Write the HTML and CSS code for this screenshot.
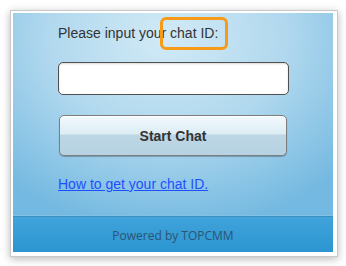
FILE: index.html
```html
<!DOCTYPE html>
<html>
<head>
<meta charset="utf-8">
<link rel="stylesheet" href="styles.css">
</head>
<body>
<div class="frame">
  <div class="panel">
    <div class="content">
      <div class="label">Please input your chat ID:</div>
      <div class="highlight"></div>
      <input class="chat-input" type="text">
      <button class="start-btn">Start Chat</button>
      <a class="help-link" href="#">How to get your chat ID.</a>
    </div>
    <div class="footer">Powered by TOPCMM</div>
  </div>
</div>
</body>
</html>
```
FILE: styles.css
```css
html, body {
  margin: 0;
  padding: 0;
  background: #ffffff;
  width: 346px;
  height: 266px;
  overflow: hidden;
}
.frame {
  margin: 10px 0 0 10px;
  width: 322px;
  height: 241px;
  border: 1px solid #c9c9c9;
  padding: 2px;
  background: #ffffff;
  box-shadow: 0 2px 8px rgba(0,0,0,0.28);
}
.panel {
  width: 320px;
  height: 239px;
  display: flex;
  flex-direction: column;
}
.content {
  position: relative;
  flex: 1;
  display: flex;
  flex-direction: column;
  align-items: flex-start;
  padding: 12px 0 0 45px;
  background: radial-gradient(ellipse 75% 95% at 48% 12%, #d2eaf6 0%, #b0d8ee 50%, #74b9e1 100%);
  border-bottom: 1px solid #3d8fc3;
  box-shadow: inset 0 -1px 0 #83c1e4;
}
.label {
  font-family: "Liberation Sans", Arial, sans-serif;
  font-size: 14px;
  line-height: 17px;
  color: #333333;
}
.highlight {
  position: absolute;
  left: 147px;
  top: 4px;
  width: 62px;
  height: 27px;
  border: 3px solid #f79a17;
  border-radius: 6px;
}
.chat-input {
  margin-top: 20px;
  box-sizing: border-box;
  width: 231px;
  height: 33px;
  border: 1.5px solid #505050;
  border-radius: 5px;
  background: #ffffff;
  padding: 0 6px;
  outline: none;
  box-shadow: inset 0 1px 2px rgba(0,0,0,0.15);
}
.start-btn {
  margin-top: 20px;
  margin-left: 1px;
  box-sizing: border-box;
  width: 228px;
  height: 41px;
  border: 1px solid #7d7d7d;
  border-radius: 5px;
  background: linear-gradient(to bottom, #f2f9fc 0%, #dcedf4 45%, #bcd6e4 50%, #b7d2e2 100%);
  box-shadow: inset 0 1px 0 #ffffff, 0 1px 1px rgba(0,0,0,0.25);
  font-family: "Liberation Sans", Arial, sans-serif;
  font-weight: bold;
  font-size: 14px;
  color: #333333;
  padding: 0;
}
.help-link {
  margin-top: 20px;
  font-family: "Liberation Sans", Arial, sans-serif;
  font-size: 14px;
  line-height: 17px;
  color: #1f4fff;
  text-decoration: underline;
}
.footer {
  height: 35px;
  display: flex;
  align-items: center;
  justify-content: center;
  background: linear-gradient(to bottom, #41a3da 0%, #2b96d1 100%);
  font-family: "Open Sans", sans-serif;
  font-size: 12px;
  color: #2b5475;
  padding-top: 1px;
  box-sizing: border-box;
}
```
